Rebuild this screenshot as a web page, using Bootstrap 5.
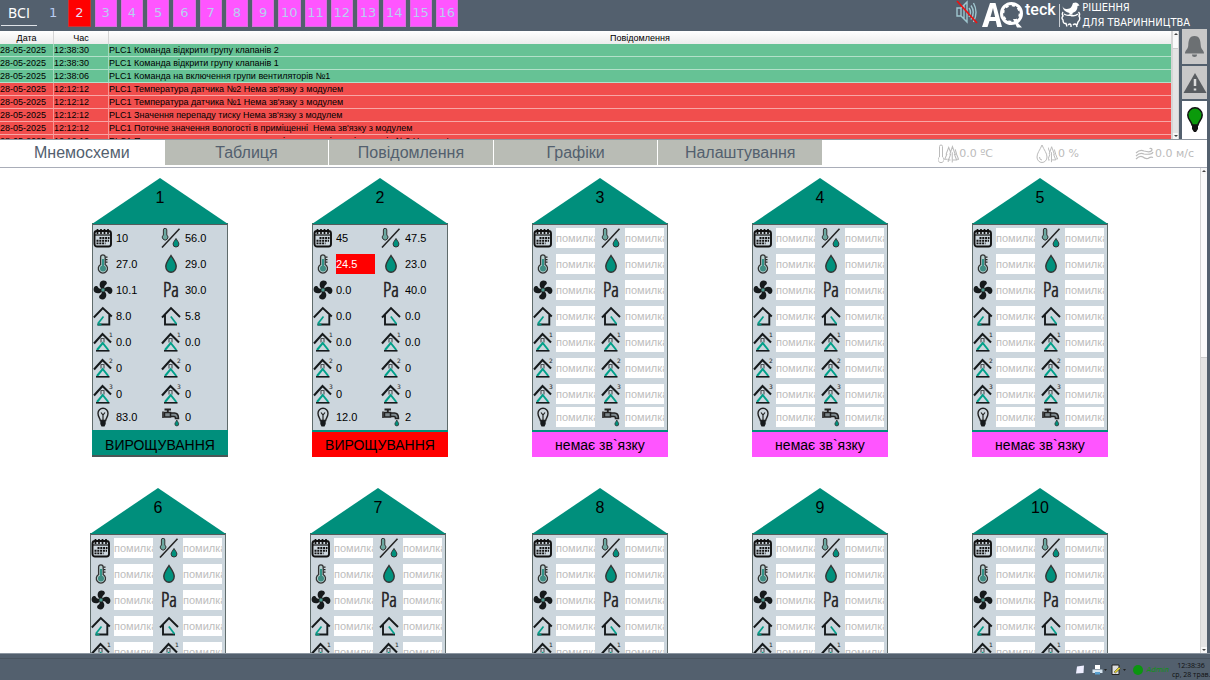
<!DOCTYPE html>
<html lang="uk">
<head>
<meta charset="utf-8">
<meta name="viewport" content="width=device-width, initial-scale=1">
<title>AQteck – Мнемосхеми</title>
<link href="https://cdn.jsdelivr.net/npm/bootstrap@5.3.0/dist/css/bootstrap.min.css" rel="stylesheet">
<style>
  :root { --slate:#53606e; --teal:#008f7c; --pink:#ff55ff; --line:#a9adb8; }
  body { font-family:"Liberation Sans", Arial, sans-serif; background:var(--slate); color:#000; }
  button { border:0; padding:0; }

  .topbar { height:29px; background:var(--slate); }
  .plc-all { width:36px; height:26px; margin-left:1px; background:none; color:#fff; border-bottom:1px solid #dfe3e8; font:14px/24px "Noto Sans", sans-serif; }
  .plc-grid { display:grid; grid-template-columns:repeat(16,1fr); gap:4px; width:416px; margin-left:5px; }
  .plc-grid button { height:27px; background:var(--pink); color:#b9cdf0; border:1px solid #d86fdc; border-top:0; font:13px/26px "DejaVu Sans", sans-serif; }
  .plc-grid .is-on { background:none; border-color:transparent; }
  .plc-grid .is-alarm { background:#f00; border-color:#c33; color:#e6dff0; }
  .slogan { font:11px/15px "DejaVu Sans Condensed", "DejaVu Sans", sans-serif; color:#fff; }
  .brand-row { margin-right:20px; }

  .alerts { height:110px; }
  .log-view { margin-top:2px; min-width:0; border-right:1px solid #d5d5d5; background:#f3f3f3; }
  .log-grid { width:100%; table-layout:fixed; border-collapse:separate; border-spacing:0; font-size:9px; line-height:12px; white-space:pre; }
  .log-grid th { height:13px; padding:0; font-weight:400; text-align:center; background:linear-gradient(#fff,#ececec); border-right:1px solid #d5d5d5; }
  .log-grid td { height:13px; padding:0; border-bottom:1px solid rgba(255,255,255,.5); border-right:1px solid rgba(255,255,255,.4); }
  .log-grid td:last-child, .log-grid th:last-child { border-right:0; }
  .ev-ok td { background:#66c295; }
  .ev-bad td { background:#f14e4d; }
  .c-date { width:54px; } .c-time { width:55px; }
  .sbar { width:7px; background:#e4e4e4; border-left:1px solid #d5d5d5; }
  .sbar i { height:6px; background:#f7f7f7; display:flex; align-items:center; justify-content:center; }
  .sbar i::after { content:""; border:2px solid transparent; border-bottom-color:#444; border-top:0; }
  .sbar i:last-child::after { border-bottom:0; border-top:2px solid #444; }
  .sbar b { background:#fafafa; border-bottom:1px solid #ccc; }
  .thumb-short { height:12px; }
  .thumb-long { height:38%; }
  .side { width:25px; margin:0 3px; gap:2px; }
  .side button { background:#c8c8c8; }
  .side .lit { background:#fff; }

  .tabs-row { height:29px; background:#fff; border-top:1px solid #8f969f; border-bottom:1px solid var(--line); margin-right:3px; }
  .tab-list { width:822px; gap:1px; }
  .tab-list button { flex:1 1 0; height:25px; background:#b9bcb5; color:var(--slate); font-size:16px; line-height:24px; }
  .tab-list .is-current { background:#fff; }
  .meteo { gap:43px; font:11px/16px "DejaVu Sans", sans-serif; color:#bbb; margin-right:13px; }
  .meteo div:last-child { margin-left:13px; }

  .scene { margin-right:3px; min-height:0; background:#fff; }
  .yard { padding:10px 50px 0; overflow-y:auto; scrollbar-width:none; }
  .yard::-webkit-scrollbar { display:none; }
  .house-col { margin-bottom:31px; }
  .house { width:136px; }
  .roof { position:relative; height:46px; }
  .roof span { position:absolute; inset:10px 0 auto; text-align:center; font-size:16px; line-height:20px; }
  .walls { background:#ccd6dd; border:1px solid #5f6b6b; border-top:2px solid #545c5c; border-bottom:0; display:grid; grid-template-columns:68px 1fr; grid-template-rows:repeat(7,26px) 20px; height:207px; margin-top:-1px; align-content:start; }
  .cell { display:flex; align-items:center; gap:3px; }
  .cell:nth-child(even) { gap:4px; }
  .val { width:39px; height:20px; overflow:hidden; white-space:nowrap; font-size:11px; line-height:20px; }
  .val.err { background:#fff; color:#bdbdbd; }
  .val.hot { background:#f00; color:#fff; }
  .unit { font-family:"Open Sans Condensed Light", "DejaVu Sans Condensed", sans-serif; font-size:20px; fill:#222; stroke:#222; stroke-width:.6px; }
  .state { height:27px; border-top:2px solid var(--teal); font-size:14px; line-height:26px; text-align:center; background:var(--pink); white-space:nowrap; }
  .state.grow { background:var(--teal); border-bottom:2px solid #4c5656; }
  .state.alarm { background:#f00; }

  .tray { height:27px; background:var(--slate); border-top:1px solid #8b95a0; }
  .tray-line { height:5px; border-bottom:1px solid #49545f; margin-bottom:2px; }
  .clock { font:7px/9px "Open Sans", sans-serif; color:#111; width:38px; margin-left:3px; }
  .user { font:italic 7px/12px "DejaVu Sans", sans-serif; color:#0b960f; }
</style>
</head>
<body class="vh-100 d-flex flex-column overflow-hidden">

<svg width="0" height="0" class="position-absolute" aria-hidden="true">
  <defs>
    <symbol id="i-cal" viewBox="0 0 20 20"><rect x="1.500" y="3" width="16.500" height="15.500" rx="2.500" fill="none" stroke="#111" stroke-width="1.900"/><path d="M2 7h16" stroke="#111" stroke-width="1.200"/><path d="M4.500 1v5M8 1v5M11.500 1v5M15 1v5" stroke="#111" stroke-width="1.700"/><path d="M6.500 10h10M3.500 12.700H16M3.500 15.400h9" stroke="#111" stroke-width="1.900" stroke-dasharray="2 .8"/></symbol>
    <symbol id="i-mix" viewBox="0 0 20 20"><path d="M1 19.500 18.500 .8" stroke="#222" stroke-width="1.500"/><path d="M2.400 7V2a1.700 1.700 0 0 1 3.400 0v5a2.800 2.800 0 1 1-3.400 0z" fill="#6ba79f" stroke="#333" stroke-width="1"/><path d="M15 10.500c1.300 2.300 2.900 3.800 2.900 5.600a2.900 2.900 0 0 1-5.800 0c0-1.800 1.600-3.300 2.900-5.600z" fill="#00917d" stroke="#333" stroke-width="1"/></symbol>
    <symbol id="i-temp" viewBox="0 0 20 20"><path d="M7.600 10.500V3.200a2.300 2.300 0 0 1 4.600 0v7.300a4.600 4.600 0 1 1-4.600 0z" fill="#b5cfcf" stroke="#333" stroke-width="1.300"/><path d="M10 5v8" stroke="#1b8a7b" stroke-width="1.700"/><circle cx="10" cy="14.400" r="3" fill="#3f8d83"/><path d="M12.500 3.200h2M12.500 5.700h2M12.500 8.200h2" stroke="#222" stroke-width="1.300"/></symbol>
    <symbol id="i-drop" viewBox="0 0 20 20"><path d="M10 1.500c2.600 4.200 5.200 7.200 5.200 11a5.200 5.800 0 0 1-10.400 0c0-3.800 2.600-6.800 5.200-11z" fill="#00917d" stroke="#333" stroke-width="1.400"/></symbol>
    <symbol id="i-fan" viewBox="0 0 20 20"><g fill="#161a1c"><path id="blade" d="M9.500 9C5.500 8 5.800 1 10 .6c4.400-.3 4.800 3.400 2.500 4.600-1.400.8-1.200 2.300-1 3.800z"/><use href="#blade" transform="rotate(90 10 10)"/><use href="#blade" transform="rotate(180 10 10)"/><use href="#blade" transform="rotate(270 10 10)"/></g><circle cx="10" cy="10" r="2" fill="#4b9d92" stroke="#222" stroke-width=".6"/></symbol>
    <symbol id="i-in" viewBox="0 0 20 20"><path d="M.8 11.500 9.800 2l9 8.500M16.300 9v9.500H4.500" fill="none" stroke="#161a1c" stroke-width="1.900"/><path d="M5 17.500 10.500 10.500" stroke="#00a08a" stroke-width="1.700"/><path d="M4.500 18.500h4" stroke="#00917d" stroke-width="1.800"/></symbol>
    <symbol id="i-out" viewBox="0 0 20 20"><path d="M1 11.500 10 2l9 9M4 9v9.500h12" fill="none" stroke="#161a1c" stroke-width="1.900"/><path d="M15.500 18 9.800 10.500" stroke="#00a08a" stroke-width="1.700"/></symbol>
    <symbol id="i-air" viewBox="0 0 20 20"><path d="M1 11.500 9.500 2l8.500 8.500" fill="none" stroke="#161a1c" stroke-width="2.100"/><path d="M8 10.500V6.500h3V10.500" fill="none" stroke="#4a4f52" stroke-width="1.100"/><path d="M4 18 9.700 11l5.600 7" fill="none" stroke="#00a08a" stroke-width="2"/><path d="M3 18.800h13.500" stroke="#161a1c" stroke-width="1.600"/></symbol>
    <symbol id="i-lamp" viewBox="0 0 20 20"><path d="M7.300 13.500C7 11 5 10 5 6.300a5 5 0 0 1 10 0c0 3.700-2 4.700-2.300 7.200z" fill="none" stroke="#222" stroke-width="1.400"/><path d="M10 13V7.500M8 5.500l2 2.500 2-2.500" fill="none" stroke="#222" stroke-width="1.200"/><path d="M7.300 13.500h5.400v3.500l-1.200 2.500h-3L7.300 17z" fill="#161a1c"/></symbol>
    <symbol id="i-tap" viewBox="0 0 20 20"><path d="M3.500 2.500h6.500M6.800 2v4" stroke="#222" stroke-width="1.900"/><path d="M3.500 5.500h6v4.500h-6zM9.500 6h4c3 0 4 1.700 4 5.500h-3c0-1.500-.5-2-1.500-2H9.500" fill="#7d888d" stroke="#222" stroke-width="1.500"/><path d="M2 4.500v6.500" stroke="#222" stroke-width="1.600"/><path d="M15.800 13c1 2 1.900 2.800 1.900 4a1.900 1.900 0 0 1-3.800 0c0-1.200.9-2 1.900-4z" fill="#00917d" stroke="#333" stroke-width=".8"/></symbol>
    <symbol id="i-trees" viewBox="0 0 16 20"><path d="M3.500 15.500H.8L3 10.500 2.300 10 5 3l2 5M4.500 15v3.500M7 16.500H4.800L7 10.500 6.300 10 9 2l3 8.500-.8 0L13.500 16.500H9.500M8.800 8v11M12 5l1.500 5.500 2 5H14" fill="none" stroke="#bbb" stroke-width="1.100"/></symbol>
  </defs>
</svg>

<header class="topbar d-flex justify-content-between flex-shrink-0">
  <nav class="d-flex" id="plcNav" aria-label="Контролери">
    <button type="button" class="plc-all">ВСІ</button>
    <div class="plc-grid" id="plcGrid"></div>
  </nav>
  <div class="brand-row d-flex align-items-start">
    <svg width="22" height="26" viewBox="0 0 22 26" aria-label="Звук вимкнено"><g fill="none" stroke="#9fc6cf" stroke-width="1.400"><path d="M1 8h4l6-6v20l-6-6H1zM5 8v8M8 5v14"/><path d="M13 8q3 4 0 9M15 5.500q4.500 6.500 0 14M17.500 3q5 9 0 19" /></g><path d="M1 1 21 23" stroke="#f01010" stroke-width="1.700"/></svg>
    <svg width="100" height="29" viewBox="0 0 100 29" class="ms-1" aria-label="AQteck">
      <path d="M0 27 8 3h5.500L20 27h-4.800l-1.400-6H7.500l-2 6zM8.500 17h4.600L11 8z" fill="#fff"/>
      <circle cx="29.500" cy="13.500" r="10" fill="none" stroke="#fff" stroke-width="3"/>
      <circle cx="29.500" cy="13.500" r="8.200" fill="none" stroke="#fff" stroke-width="2" stroke-dasharray="3.200 3.240"/>
      <path d="M31 19h4v3l5 5.500h-5z" fill="#fff"/>
      <text x="43" y="15" font-family="Roboto" font-weight="500" font-size="16" fill="#fff">teck</text>
      <path d="M77.500 4v23" stroke="#c9ced4" stroke-width="1"/>
      <path d="M80.500 5c0 3 2 4 4.500 4 4 0 5-3 6-6l3-.5 2 1 1.500 2-2 .5c0 4-2 6-5 7v1.500h-3V13c-4-1-7-3-7-8z" fill="#fff"/>
      <path d="M81 12q-1.500 2 0 4-2 2 0 4 0 4 3 3.500l1 3M86 25q2-2 3 0v2M91 25q2-2 3.500 0l.5 2M96.500 12q2 2 .5 4 2 3-1 6l-1 3M82 14q3 2 6 1 4 2 8-1" fill="none" stroke="#fff" stroke-width="1.400"/>
    </svg>
    <div class="slogan text-nowrap">РІШЕННЯ<br>ДЛЯ ТВАРИННИЦТВА</div>
  </div>
</header>

<section class="alerts d-flex flex-shrink-0">
  <div class="log-view flex-grow-1 overflow-hidden">
    <table class="log-grid">
      <colgroup><col class="c-date"><col class="c-time"><col></colgroup>
      <thead><tr><th>Дата</th><th>Час</th><th>Повідомлення</th></tr></thead>
      <tbody>
        <tr class="ev-ok"><td>28-05-2025</td><td>12:38:30</td><td>PLC1 Команда відкрити групу клапанів 2</td></tr>
        <tr class="ev-ok"><td>28-05-2025</td><td>12:38:30</td><td>PLC1 Команда відкрити групу клапанів 1</td></tr>
        <tr class="ev-ok"><td>28-05-2025</td><td>12:38:06</td><td>PLC1 Команда на включення групи вентиляторів №1</td></tr>
        <tr class="ev-bad"><td>28-05-2025</td><td>12:12:12</td><td>PLC1 Температура датчика №2 Нема зв'язку з модулем</td></tr>
        <tr class="ev-bad"><td>28-05-2025</td><td>12:12:12</td><td>PLC1 Температура датчика №1 Нема зв'язку з модулем</td></tr>
        <tr class="ev-bad"><td>28-05-2025</td><td>12:12:12</td><td>PLC1 Значення перепаду тиску Нема зв'язку з модулем</td></tr>
        <tr class="ev-bad"><td>28-05-2025</td><td>12:12:12</td><td>PLC1 Поточне значення вологості в приміщенні  Нема зв'язку з модулем</td></tr>
        <tr class="ev-bad"><td>28-05-2025</td><td>12:12:12</td><td>PLC1 Поточне значення температури повітря в приміщенні датчиків №2 Нема зв'язку</td></tr>
      </tbody>
    </table>
  </div>
  <div class="sbar log-view d-flex flex-column flex-shrink-0" aria-hidden="true"><i></i><b class="thumb-short"></b><span class="flex-grow-1"></span><i></i></div>
  <div class="side d-flex flex-column flex-shrink-0">
    <button type="button" class="flex-fill d-flex align-items-center justify-content-center" aria-label="Сигнал"><svg width="21" height="23" viewBox="0 0 21 23"><path d="M10.500 1C5 1 4.500 6 4.300 10 4 15 1 15 1 18.500h19c0-3.500-3-3.500-3.300-8.500C16.500 6 16 1 10.500 1z" fill="#6c7073"/><path d="M8 19.500h5a2.500 2.500 0 0 1-5 0z" fill="#6c7073"/></svg></button>
    <button type="button" class="flex-fill d-flex align-items-center justify-content-center" aria-label="Попередження"><svg width="24" height="22" viewBox="0 0 24 22"><path d="M12 1 23.500 21H.5z" fill="#595d61"/><path d="M12 7v7M12 16.500v2" stroke="#ddd" stroke-width="2.500"/></svg></button>
    <button type="button" class="lit flex-fill d-flex align-items-center justify-content-center" aria-label="Світло"><svg width="18" height="26" viewBox="0 0 18 26"><path d="M6 18C5.500 14 1.800 13 1.800 8a7.200 7.200 0 0 1 14.400 0c0 5-3.700 6-4.200 10z" fill="#0b9a0b" stroke="#111" stroke-width="1.500"/><path d="M6 18h6v4l-2 3H8l-2-3z" fill="#111"/></svg></button>
  </div>
</section>

<div class="tabs-row d-flex justify-content-between flex-shrink-0">
  <div class="tab-list d-flex" role="tablist">
    <button type="button" role="tab" class="is-current" aria-selected="true">Мнемосхеми</button>
    <button type="button" role="tab">Таблиця</button>
    <button type="button" role="tab">Повідомлення</button>
    <button type="button" role="tab">Графіки</button>
    <button type="button" role="tab">Налаштування</button>
  </div>
  <div class="meteo d-flex align-items-center text-nowrap">
    <div class="d-flex align-items-center"><svg width="6" height="20" viewBox="0 0 6 20"><path d="M1.500 13V2.500a1.500 1.500 0 0 1 3 0V13a3 3 0 1 1-3 0z" fill="none" stroke="#bbb"/></svg><svg width="15" height="20"><use href="#i-trees"/></svg><span>0.0 ºC</span></div>
    <div class="d-flex align-items-center"><svg width="12" height="20" viewBox="0 0 12 20"><path d="M6 1c2 5 5 8 5 12a5 5.500 0 0 1-10 0c0-4 3-7 5-12zM3.500 13q0 3 2.500 3" fill="none" stroke="#bbb"/></svg><svg width="10" height="20" viewBox="5 0 11 20"><use href="#i-trees" width="16" height="20"/></svg><span>0 %</span></div>
    <div class="d-flex align-items-center"><svg width="20" height="14" viewBox="0 0 20 14"><path d="M1 6q4-4 8-2 7 2 8-1 0-2-2.500-1.500M1 9q4-4 8-2 8 1 9-2M1 12q4-4 7-2 2 2 5 1.500 3-2 5-1" fill="none" stroke="#bbb" stroke-width="1.200"/></svg><span>0.0 м/с</span></div>
  </div>
</div>

<main class="scene flex-grow-1 d-flex">
  <div class="yard flex-grow-1">
    <div class="row g-0 row-cols-5" id="yard"></div>
  </div>
  <div class="sbar d-flex flex-column flex-shrink-0" aria-hidden="true"><i></i><b class="thumb-long"></b><span class="flex-grow-1"></span><i></i></div>
</main>

<footer class="tray flex-shrink-0">
  <div class="tray-line"></div>
  <div class="d-flex justify-content-end align-items-center">
    <svg width="80" height="12" viewBox="0 0 80 12" aria-hidden="true">
      <path d="M10 2.500 17 1.500 16.500 9 9 9.500z" fill="#eef"/>
      <path d="M28 1h5v4h-5z" fill="#fff"/><path d="M25.500 5.500h10V9h-10z" fill="#d6e4f0"/><path d="M28 8h5v2.500h-5z" fill="#5aa0d0"/><path d="m37 5 3 0-1.500 2zM56 5l3 0-1.500 2z" fill="#222"/>
      <path d="M45 1h7v9.500h-7z" fill="#ddd" stroke="#222"/><path d="m47 8 5-5 1.500 1.500-5 4.500z" fill="#e5d32a" stroke="#333" stroke-width=".5"/>
      <circle cx="71" cy="6" r="5" fill="#0b960f"/>
    </svg>
    <span class="user">Admin</span>
    <div class="clock text-center text-nowrap">12:38:36<br>ср, 28 трав.</div>
  </div>
</footer>

<script src="https://cdn.jsdelivr.net/npm/bootstrap@5.3.0/dist/js/bootstrap.bundle.min.js"></script>
<script>
  const icons = ['cal','mix','temp','drop','fan','pa','in','out','air1','air1','air2','air2','air3','air3','lamp','tap'];
  const data = {
    1: ['10','56.0','27.0','29.0','10.1','30.0','8.0','5.8','0.0','0.0','0','0','0','0','83.0','0'],
    2: ['45','47.5','24.5','23.0','0.0','40.0','0.0','0.0','0.0','0.0','0','0','0','0','12.0','2']
  };
  const states = { 1: ['grow','ВИРОЩУВАННЯ'], 2: ['alarm','ВИРОЩУВАННЯ'] };

  function icon(name) {
    if (name === 'pa')
      return '<svg width="20" height="22"><text x="10" y="18" text-anchor="middle" class="unit">Pa</text></svg>';
    if (name.startsWith('air'))
      return `<svg width="20" height="22"><use href="#i-air" y="1" width="20" height="20"/><text x="16" y="6" font-family="DejaVu Sans" font-size="6" fill="#222">${name[3]}</text></svg>`;
    return `<svg width="20" height="20"><use href="#i-${name}"/></svg>`;
  }

  document.getElementById('plcGrid').innerHTML = Array.from({ length: 16 }, (_, i) =>
    `<button type="button" class="${i === 0 ? 'is-on' : i === 1 ? 'is-alarm' : ''}">${i + 1}</button>`).join('');

  document.getElementById('yard').innerHTML = Array.from({ length: 16 }, (_, i) => {
    const n = i + 1, vals = data[n], st = states[n] || ['', 'немає зв`язку'];
    const cells = icons.map((ic, k) => {
      const cls = !vals ? 'err' : (n === 2 && k === 2) ? 'hot' : '';
      return `<div class="cell">${icon(ic)}<span class="val ${cls}">${vals ? vals[k] : 'помилка'}</span></div>`;
    }).join('');
    return `<div class="col house-col d-flex justify-content-center ${n === 6 || n === 7 ? 'pe-1' : ''}">
      <article class="house"><div class="roof"><svg width="136" height="46"><path d="M68 0 136 46H0z" fill="#008f7c"/></svg><span>${n}</span></div>
      <div class="walls">${cells}</div><div class="state ${st[0]}">${st[1]}</div></article></div>`;
  }).join('');
</script>
</body>
</html>
